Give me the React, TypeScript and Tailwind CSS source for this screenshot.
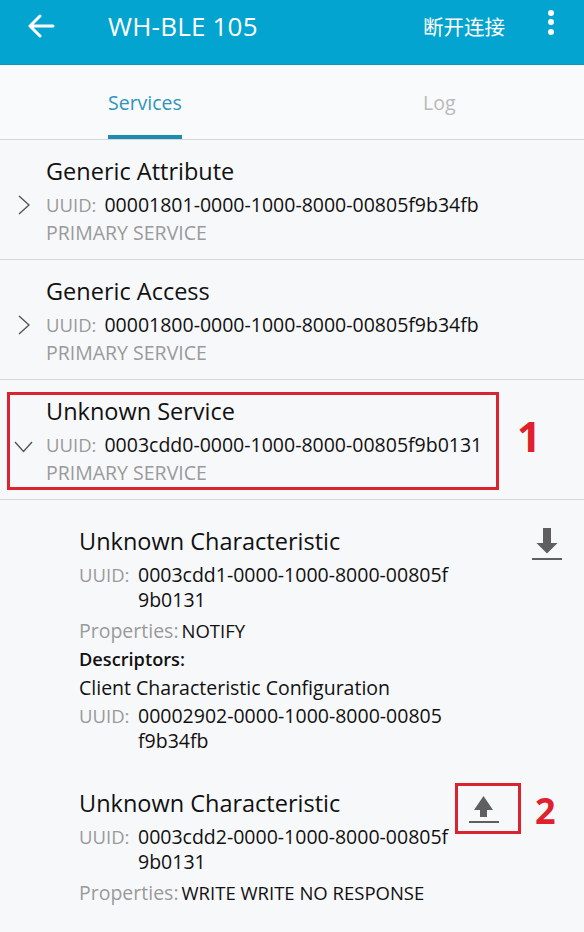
import React from "react";

const font = { fontFamily: '"Open Sans", "Noto Sans", "Noto Sans CJK SC", sans-serif' };

function Chevron({ down }: { down?: boolean }) {
  return down ? (
    <svg width="19" height="12" viewBox="0 0 19 12" className="block">
      <path d="M1 1 L9.5 10.5 L18 1" fill="none" stroke="#555" strokeWidth="1.4" />
    </svg>
  ) : (
    <svg width="12" height="20" viewBox="0 0 12 20" className="block">
      <path d="M1 1 L11 10 L1 19" fill="none" stroke="#555" strokeWidth="1.4" />
    </svg>
  );
}

function Service({ name, uuid, expanded }: { name: string; uuid: string; expanded?: boolean }) {
  return (
    <div className="relative h-[120px] border-b border-[#d6d6d8] pt-4">
      <div className={expanded ? "absolute left-[14px] top-[61px]" : "absolute left-[18px] top-[55px]"}>
        <Chevron down={expanded} />
      </div>
      <div className="pl-[46px]">
        <div className="text-[23.5px] leading-[30px] text-[#111]">{name}</div>
        <div className="mt-[5px] flex text-[19.5px] leading-[28px]">
          <span className="text-[#9a9a9a] text-[18.5px]">UUID:</span>
          <span className="ml-[8px] text-[#111]">{uuid}</span>
        </div>
        <div className="text-[19.5px] leading-[28px] text-[#9a9a9a]">PRIMARY SERVICE</div>
      </div>
    </div>
  );
}

function UuidLines({ a, b }: { a: string; b: string }) {
  return (
    <div className="flex text-[19.5px] leading-[28px]">
      <span className="w-[59px] shrink-0 text-[18.5px] text-[#9a9a9a]">UUID:</span>
      <div className="text-[#111]">
        <div>{a}</div>
        <div className="-mt-[3px]">{b}</div>
      </div>
    </div>
  );
}

export default function App() {
  return (
    <div className="w-[584px] h-[932px] overflow-hidden bg-[#f7f8fa]" style={font}>
      {/* Header */}
      <div className="h-[65px] bg-[#03a4d0] flex items-center pb-[12px] pr-[30px] text-white border-b border-[#0b96bd]">
        <div className="w-[108px] pl-[27px] shrink-0">
          <svg width="28" height="24" viewBox="0 0 28 24" className="block">
            <path d="M26 12 H3 M13 2 L3 12 L13 22" fill="none" stroke="#fff" strokeWidth="3" strokeLinecap="round" strokeLinejoin="round" />
          </svg>
        </div>
        <div className="text-[26px] leading-none tracking-[0.2px]">WH-BLE 105</div>
        <div className="ml-auto text-[20.5px] leading-none" style={{ fontFamily: '"Noto Sans CJK SC", sans-serif' }}>断开连接</div>
        <div className="ml-[43px] mb-[8px] flex flex-col gap-[3.5px]">
          <span className="block w-[6px] h-[6px] rounded-full bg-white" />
          <span className="block w-[6px] h-[6px] rounded-full bg-white" />
          <span className="block w-[6px] h-[6px] rounded-full bg-white" />
        </div>
      </div>
      {/* Tabs */}
      <div className="h-[75px] border-b border-[#d6d6d8] flex bg-[#f9fafb]">
        <div className="ml-[108px] w-[74px] flex flex-col">
          <div className="pt-[24px] text-[19.5px] leading-[28px] text-[#2f95ba]">Services</div>
          <div className="mt-auto h-[4px] bg-[#1a8db1]" />
        </div>
        <div className="ml-[241px] pt-[24px] text-[19.5px] leading-[28px] text-[#b9b9b9]">Log</div>
      </div>
      {/* Services */}
      <Service name="Generic Attribute" uuid="00001801-0000-1000-8000-00805f9b34fb" />
      <Service name="Generic Access" uuid="00001800-0000-1000-8000-00805f9b34fb" />
      <div className="relative">
        <Service name="Unknown Service" uuid="0003cdd0-0000-1000-8000-00805f9b0131" expanded />
        <div className="absolute left-[7px] top-[12px] w-[492px] h-[98px] border-[3px] border-[#d92330]" />
        <div className="absolute left-[517px] top-[35px] text-[42px] font-bold leading-none text-[#e0202c]">1</div>
      </div>
      {/* Characteristics */}
      <div className="pl-[79px] pt-[26px]">
        <div className="relative">
          <div className="text-[23.5px] leading-[30px] text-[#111]">Unknown Characteristic</div>
          <div className="absolute left-[453px] top-[2px]">
            <svg width="30" height="32" viewBox="0 0 30 32" className="block">
              <path d="M11 0 L19 0 L19 15 L25.5 15 L15 25.5 L4.5 15 L11 15 Z" fill="#5f5f61" />
              <rect x="0" y="30" width="30" height="2" fill="#5f5f61" />
            </svg>
          </div>
          <div className="mt-[5px]">
            <UuidLines a="0003cdd1-0000-1000-8000-00805f" b="9b0131" />
          </div>
          <div className="flex text-[19px] leading-[29px] mt-[2px]">
            <span className="text-[#9a9a9a] text-[19.5px]">Properties:</span>
            <span className="text-[#111] ml-[3px] text-[18.5px]">NOTIFY</span>
          </div>
          <div className="text-[18.2px] leading-[29px] font-semibold text-[#111]">Descriptors:</div>
          <div className="text-[19.5px] leading-[28px] text-[#111]">Client Characteristic Configuration</div>
          <UuidLines a="00002902-0000-1000-8000-00805" b="f9b34fb" />
        </div>
        <div className="relative mt-[33px]">
          <div className="text-[23.5px] leading-[30px] text-[#111]">Unknown Characteristic</div>
          <div className="absolute left-[376px] top-[-5px] w-[66px] h-[51px] border-[3px] border-[#d92330]" />
          <div className="absolute left-[390px] top-[8px]">
            <svg width="30" height="27" viewBox="0 0 30 27" className="block">
              <path d="M14.5 0 L24 14 L18 14 L18 21 L11 21 L11 14 L5 14 Z" fill="#5f5f61" />
              <rect x="0" y="25" width="30" height="2" fill="#5f5f61" />
            </svg>
          </div>
          <div className="absolute left-[456px] top-[5px] text-[36px] font-bold leading-none text-[#e0202c]">2</div>
          <div className="mt-[5px]">
            <UuidLines a="0003cdd2-0000-1000-8000-00805f" b="9b0131" />
          </div>
          <div className="flex text-[19px] leading-[29px] mt-[2px]">
            <span className="text-[#9a9a9a] text-[19.5px]">Properties:</span>
            <span className="text-[#111] ml-[3px] text-[18.5px]">WRITE WRITE NO RESPONSE</span>
          </div>
        </div>
      </div>
    </div>
  );
}
